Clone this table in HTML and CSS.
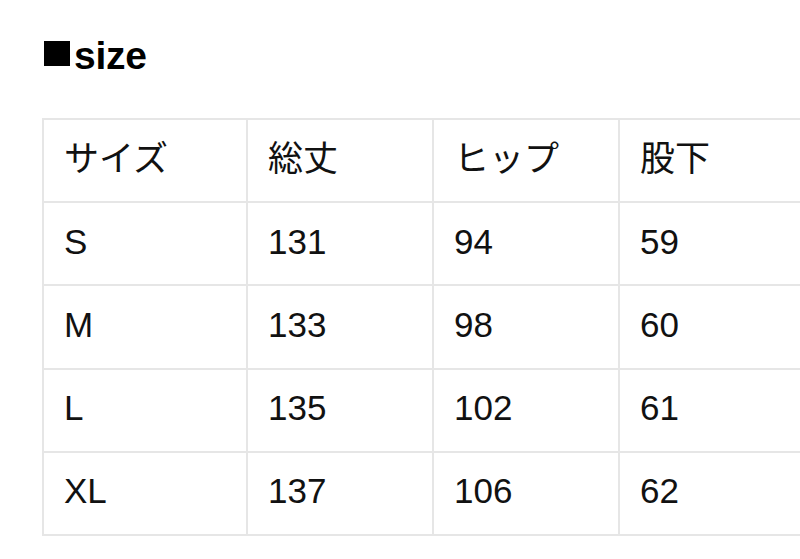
FILE: index.html
```html
<!DOCTYPE html>
<html lang="ja">
<head>
<meta charset="utf-8">
<link rel="stylesheet" href="styles.css">
</head>
<body>
<div class="page">
  <h2 class="title"><span class="square"></span>size</h2>
  <div class="table-wrap">
    <table class="size-table">
      <colgroup>
        <col class="c1"><col class="c2"><col class="c3"><col class="c4">
      </colgroup>
      <tr><td>サイズ</td><td>総丈</td><td>ヒップ</td><td>股下</td></tr>
      <tr><td>S</td><td>131</td><td>94</td><td>59</td></tr>
      <tr><td>M</td><td>133</td><td>98</td><td>60</td></tr>
      <tr><td>L</td><td>135</td><td>102</td><td>61</td></tr>
      <tr><td>XL</td><td>137</td><td>106</td><td>62</td></tr>
    </table>
  </div>
</div>
</body>
</html>
```

FILE: styles.css
```css
html, body {
  margin: 0;
  padding: 0;
  background: #ffffff;
  overflow: hidden;
}
body {
  width: 800px;
  height: 559px;
  font-family: "Liberation Sans", "Noto Sans CJK JP", sans-serif;
  color: #111111;
}
.page {
  padding: 34px 0 0 42px;
}
.title {
  margin: 0;
  height: 84px;
  display: flex;
  align-items: flex-start;
  font-family: "Liberation Sans", "Noto Sans CJK JP", sans-serif;
  font-weight: 700;
  font-size: 39px;
  line-height: 44px;
  color: #000;
  letter-spacing: -0.3px;
}
.square {
  display: inline-block;
  width: 26px;
  height: 25px;
  background: #000;
  margin: 7px 4px 0 2px;
}
.table-wrap {
  width: 900px;
}
.size-table {
  border-collapse: collapse;
  table-layout: fixed;
  width: 800px;
}
.c1 { width: 204px; }
.c2 { width: 186px; }
.c3 { width: 186px; }
.c4 { width: 224px; }
.size-table td {
  border: 2px solid #e6e6e6;
  height: 83.2px;
  padding: 0 0 4px 20px;
  font-size: 35px;
  font-weight: 400;
  line-height: 40px;
  vertical-align: middle;
  box-sizing: border-box;
}
```
